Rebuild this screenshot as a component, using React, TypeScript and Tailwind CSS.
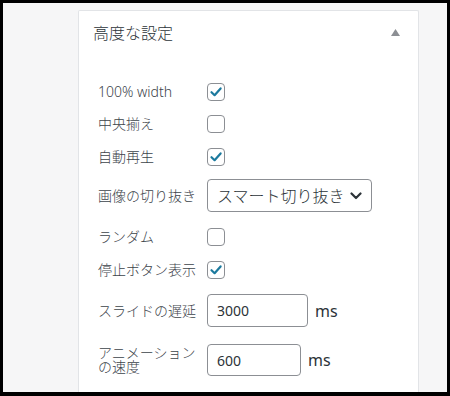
import type {ReactNode} from 'react';

const font = {fontFamily: '"Noto Sans", "Noto Sans CJK JP", sans-serif'};

function Check({checked}: {checked?: boolean}) {
  return (
    <span className="flex h-[18px] w-[18px] items-center justify-center rounded-[4px] border border-[#8c8f94] bg-white">
      {checked && (
        <svg width="14" height="14" viewBox="0 0 14 14" fill="none">
          <path
            d="M2.5 7.2 L5.6 10.2 L11.6 3.4"
            stroke="#1c7a9e"
            strokeWidth="2.2"
            strokeLinecap="round"
            strokeLinejoin="round"
          />
        </svg>
      )}
    </span>
  );
}

function Row({
  label,
  className,
  children,
}: {
  label: ReactNode;
  className?: string;
  children: ReactNode;
}) {
  return (
    <div className={`flex items-center ${className ?? ''}`}>
      <div className="flex w-[109px] shrink-0 flex-col text-[14px] leading-[14px] font-light text-[#3c434a]">
        {label}
      </div>
      {children}
    </div>
  );
}

export default function App() {
  return (
    <div
      className="flex h-[396px] w-[450px] bg-black pt-[3px] pr-[3px] pb-[4px] pl-[3px]"
      style={font}
    >
      <div className="flex flex-1 overflow-hidden bg-[#f6f6f7] pt-[7px] pr-[28px] pl-[75px]">
        <div className="flex-1 rounded-t-[2px] border border-b-0 border-[#e2e4e7] bg-white">
          <div className="flex h-[43px] items-center justify-between pr-[18px] pl-[14px]">
            <span className="text-[16px] font-light text-[#2c3338]">高度な設定</span>
            <svg width="9" height="7" viewBox="0 0 9 7">
              <path d="M4.5 0 L9 7 L0 7 Z" fill="#8c8f94" />
            </svg>
          </div>

          <div className="flex flex-col pt-[29px] pl-[19px]">
            <Row label="100% width" className="h-[18px]">
              <Check checked />
            </Row>
            <Row label="中央揃え" className="mt-[14px] h-[18px]">
              <Check />
            </Row>
            <Row label="自動再生" className="mt-[15px] h-[18px]">
              <Check checked />
            </Row>
            <Row label="画像の切り抜き" className="mt-[13px] h-[33px]">
              <div className="flex h-[33px] w-[165px] items-center justify-between rounded-[4px] border border-[#8c8f94] pr-[9px] pl-[9px]">
                <span className="text-[16px] font-light text-[#2c3338]">スマート切り抜き</span>
                <svg width="12" height="8" viewBox="0 0 12 8" fill="none">
                  <path
                    d="M1.5 1.5 L6 6 L10.5 1.5"
                    stroke="#2c3338"
                    strokeWidth="2.2"
                    strokeLinecap="round"
                    strokeLinejoin="round"
                  />
                </svg>
              </div>
            </Row>
            <Row label="ランダム" className="mt-[16px] h-[18px]">
              <Check />
            </Row>
            <Row label="停止ボタン表示" className="mt-[15px] h-[18px]">
              <Check checked />
            </Row>
            <Row label="スライドの遅延" className="mt-[15px] h-[33px]">
              <div className="flex h-[33px] w-[101px] items-center rounded-[4px] border border-[#8c8f94] pl-[9px] text-[14px] text-[#2c3338]">
                3000
              </div>
              <span className="ml-[7px] text-[16px] text-[#2c3338]">ms</span>
            </Row>
            <Row
              label={
                <>
                  <span>アニメーション</span>
                  <span>の速度</span>
                </>
              }
              className="mt-[17px] h-[32px]"
            >
              <div className="flex h-[32px] w-[94px] items-center rounded-[4px] border border-[#8c8f94] pl-[9px] text-[14px] text-[#2c3338]">
                600
              </div>
              <span className="ml-[7px] text-[16px] text-[#2c3338]">ms</span>
            </Row>
          </div>
        </div>
      </div>
    </div>
  );
}
